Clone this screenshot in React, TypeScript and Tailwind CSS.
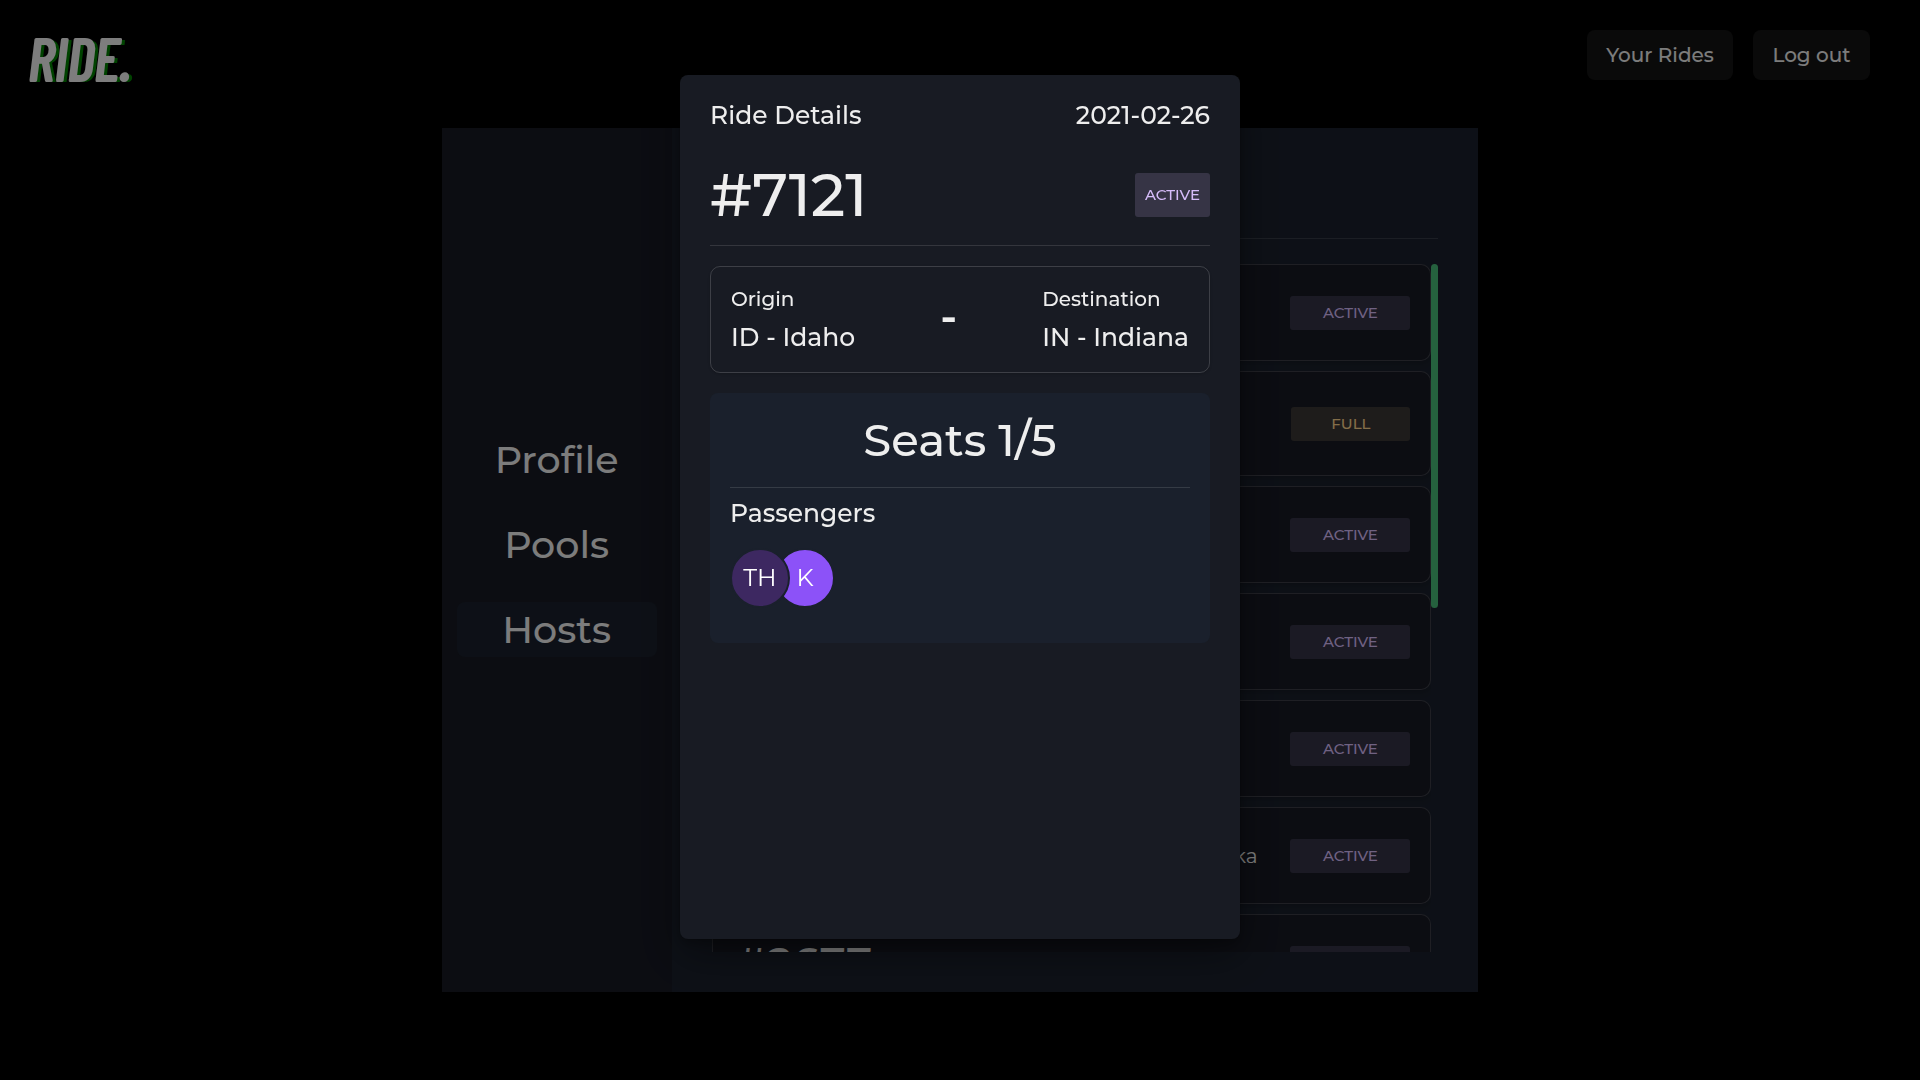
import React from "react";

type Ride = { id?: string; to?: string; status: "ACTIVE" | "FULL" };

const rides: Ride[] = [
  { status: "ACTIVE" },
  { to: "District of Columbia", status: "FULL" },
  { status: "ACTIVE" },
  { status: "ACTIVE" },
  { status: "ACTIVE" },
  { to: "NE - Nebraska", status: "ACTIVE" },
  { id: "#2677", status: "ACTIVE" },
];

function Header() {
  return (
    <header className="flex h-32 items-start justify-between pr-[50px] pl-7 pt-[30px]">
      <a
        href="#home"
        className="font-['Barlow_Condensed','Roboto',sans-serif] text-[60px] leading-[54px] font-medium italic text-[#f0f0f0] [-webkit-text-stroke:2px_#f0f0f0] [text-shadow:4px_1px_0_#008000]"
      >
        RIDE.
      </a>
      <nav className="flex gap-5">
        <button className="h-[50px] w-[146px] rounded-lg bg-white/8 text-xl font-medium">Your Rides</button>
        <button className="h-[50px] w-[117px] rounded-lg bg-white/8 text-xl font-medium">Log out</button>
      </nav>
    </header>
  );
}

function Sidebar() {
  return (
    <nav className="flex w-[230px] shrink-0 flex-col justify-center gap-[30px] bg-[#171923] px-[15px] pb-8 text-[38px] leading-[55px] font-medium">
      <button className="rounded-lg">Profile</button>
      <button className="rounded-lg">Pools</button>
      <button className="rounded-lg bg-[#1a202c]">Hosts</button>
    </nav>
  );
}

function RideCard({ ride }: { ride: Ride }) {
  const full = ride.status === "FULL";
  return (
    <li
      className={`flex shrink-0 items-center rounded-[10px] border border-white/16 bg-[#171923] pr-5 pl-6 shadow-md ${
        full ? "h-[105px]" : "h-[97px]"
      }`}
    >
      <span className="w-[375px] text-[44px] leading-[56px] font-medium">{ride.id}</span>
      <span className="mr-auto w-[150px] text-center text-xl leading-[30px]">{ride.to}</span>
      <span
        className={`h-[34px] rounded-[3px] text-center text-[15px] leading-[34px] font-medium ${
          full ? "w-[119px] bg-[#fbd38d]/16 text-[#fbd38d]" : "w-[120px] bg-[#d6bcfa]/16 text-[#d6bcfa]"
        }`}
      >
        {ride.status}
      </span>
    </li>
  );
}

function Hosts() {
  return (
    <section className="flex min-w-0 flex-1 flex-col bg-[#1a202c] p-10">
      <div className="h-[71px] border-b border-white/12" />
      <div className="mt-[25px] flex min-h-0 flex-1">
        <ul className="flex min-w-0 flex-1 flex-col gap-2.5 overflow-hidden">
          {rides.map((r, i) => (
            <RideCard key={i} ride={r} />
          ))}
        </ul>
        <div className="h-1/2 w-[7px] rounded-full bg-[#48bb78]" />
      </div>
    </section>
  );
}

function RideDialog() {
  return (
    <div className="fixed inset-0 flex items-start justify-center bg-black/48 pt-[75px]">
      <div
        role="dialog"
        aria-modal="true"
        aria-label="Ride Details"
        className="h-[80vh] w-[560px] rounded-lg bg-[#181b23] px-[30px] py-5 shadow-[0_0_0_1px_rgba(0,0,0,0.1),0_5px_10px_rgba(0,0,0,0.2),0_15px_40px_rgba(0,0,0,0.4)]"
      >
        <div className="flex justify-between text-[25px] leading-10 font-medium">
          <h2>Ride Details</h2>
          <time>2021-02-26</time>
        </div>
        <div className="mt-[30px] flex items-center justify-between border-b border-white/12 pb-5">
          <span className="text-[60px] leading-[60px] font-medium">#7121</span>
          <span className="w-[75px] rounded-[3px] bg-[#d6bcfa]/16 text-center text-[15px] leading-[44px] font-medium text-[#d6bcfa]">
            ACTIVE
          </span>
        </div>
        <div className="mt-5 flex items-center justify-between rounded-[10px] border border-white/16 p-5 font-medium shadow-sm">
          <div>
            <p className="text-xl leading-[25px]">Origin</p>
            <p className="mt-2.5 text-[25px] leading-[30px]">ID - Idaho</p>
          </div>
          <span className="mb-2 text-[44px] leading-none font-semibold">-</span>
          <div>
            <p className="text-xl leading-[25px]">Destination</p>
            <p className="mt-2.5 text-[25px] leading-[30px]">IN - Indiana</p>
          </div>
        </div>
        <div className="mt-5 rounded-lg bg-[#1a202c] px-5 pt-5 pb-[35px] font-medium">
          <h3 className="border-b border-white/12 pb-5 text-center text-[45px] leading-[54px]">Seats 1/5</h3>
          <h4 className="mt-1.5 text-[25px] leading-[38px]">Passengers</h4>
          <div className="mt-4 flex font-normal text-white">
            <span className="z-10 size-[60px] rounded-full border-2 border-[#1a202c] bg-[#3d2861] text-center text-2xl leading-[56px]">
              TH
            </span>
            <span className="-ml-[15px] size-[60px] rounded-full border-2 border-[#1a202c] bg-[#8c52f8] text-center text-2xl leading-[56px]">
              K
            </span>
          </div>
        </div>
      </div>
    </div>
  );
}

export default function App() {
  return (
    <div className="h-screen overflow-hidden bg-black font-['Montserrat','Inter',sans-serif] text-[#eeeeee]">
      <Header />
      <main className="mx-auto flex h-[80vh] w-[54%]">
        <Sidebar />
        <Hosts />
      </main>
      <RideDialog />
    </div>
  );
}
